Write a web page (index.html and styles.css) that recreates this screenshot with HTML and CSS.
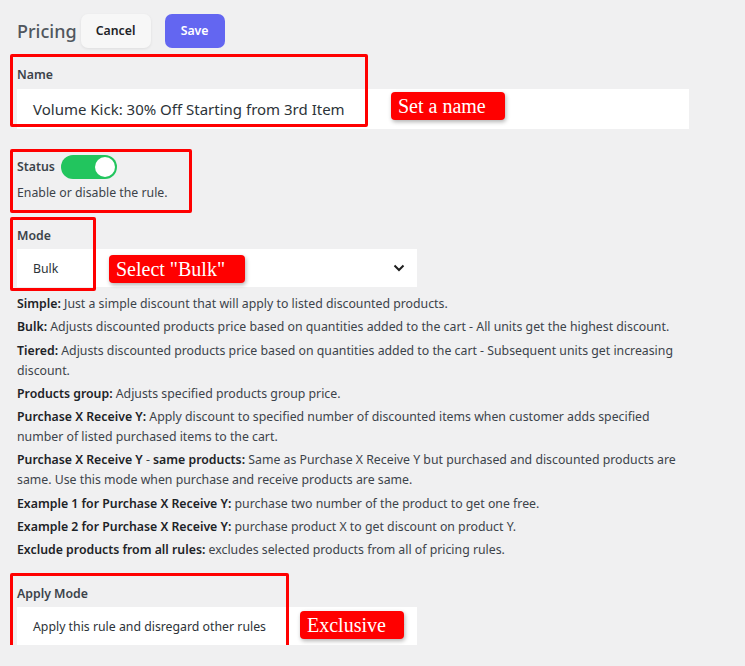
FILE: index.html
```html
<!DOCTYPE html>
<html lang="en">
  <head>
    <meta charset="UTF-8" />
    <meta name="viewport" content="width=device-width, initial-scale=1.0" />
    <title>Pricing rule</title>
    <link rel="stylesheet" href="styles.css">
  </head>
  <body>
    <div class="rule-editor">
      <div class="topbar">
        <h2 class="topbar-title">Pricing</h2>
        <button class="btn btn-cancel">Cancel</button>
        <button class="btn btn-save">Save</button>
      </div>

      <div class="field field-name">
        <label class="field-label">Name</label>
        <div class="text-input">Volume Kick: 30% Off Starting from 3rd Item</div>
        <div class="mark mark-name"></div>
        <span class="tag tag-name">Set a name</span>
      </div>

      <div class="field field-status">
        <div class="status-row">
          <label class="field-label">Status</label>
          <span class="toggle is-on"><span class="toggle-knob"></span></span>
        </div>
        <p class="field-help">Enable or disable the rule.</p>
        <div class="mark mark-status"></div>
      </div>

      <div class="field field-mode">
        <label class="field-label">Mode</label>
        <div class="select-input">
          <span>Bulk</span>
          <svg class="chevron" width="12" height="8" viewBox="0 0 12 8"><polyline points="1.5,1.5 6,6 10.5,1.5" fill="none" stroke="#1e1e1e" stroke-width="2" /></svg>
        </div>
        <div class="mark mark-mode"></div>
        <span class="tag tag-mode">Select "Bulk"</span>
      </div>

      <div class="mode-help">
        <p><b>Simple:</b> Just a simple discount that will apply to listed discounted products.</p>
        <p><b>Bulk:</b> Adjusts discounted products price based on quantities added to the cart - All units get the highest discount.</p>
        <p><b>Tiered:</b> Adjusts discounted products price based on quantities added to the cart - Subsequent units get increasing discount.</p>
        <p><b>Products group:</b> Adjusts specified products group price.</p>
        <p><b>Purchase X Receive Y:</b> Apply discount to specified number of discounted items when customer adds specified number of listed purchased items to the cart.</p>
        <p><b>Purchase X Receive Y</b> - <b>same products:</b> Same as Purchase X Receive Y but purchased and discounted products are same. Use this mode when purchase and receive products are same.</p>
        <p><b>Example 1 for Purchase X Receive Y:</b> purchase two number of the product to get one free.</p>
        <p><b>Example 2 for Purchase X Receive Y:</b> purchase product X to get discount on product Y.</p>
        <p><b>Exclude products from all rules:</b> excludes selected products from all of pricing rules.</p>
      </div>

      <div class="field field-apply">
        <label class="field-label">Apply Mode</label>
        <div class="select-input">
          <span>Apply this rule and disregard other rules</span>
          <svg class="chevron" width="12" height="8" viewBox="0 0 12 8"><polyline points="1.5,1.5 6,6 10.5,1.5" fill="none" stroke="#1e1e1e" stroke-width="2" /></svg>
        </div>
        <div class="mark mark-apply"></div>
        <span class="tag tag-apply">Exclusive</span>
      </div>
    </div>
  </body>
</html>
```

FILE: styles.css
```css
* {
  margin: 0;
  padding: 0;
  box-sizing: border-box;
}

body {
  font-family: "Noto Sans", "Open Sans", sans-serif;
  background: #f0f0f1;
  color: #3c434a;
  font-size: 12.3px;
}

.rule-editor {
  width: 745px;
  padding: 13px 0 0 17px;
}

/* header with title and actions */
.topbar {
  display: flex;
  align-items: center;
  height: 35px;
}

.topbar-title {
  font-size: 18px;
  font-weight: 500;
  color: #50575e;
  margin-right: 4px;
}

.btn {
  font-family: inherit;
  font-size: 12.3px;
  font-weight: 600;
  border: none;
  border-radius: 7px;
  height: 34px;
  cursor: pointer;
}

.btn-cancel {
  width: 70px;
  background: #f7f7f7;
  color: #1d2327;
  box-shadow: 0 1px 3px rgba(0, 0, 0, 0.08);
  margin-right: 14px;
}

.btn-save {
  width: 60px;
  background: #6366f1;
  color: #fff;
}

/* form fields */
.field {
  position: relative;
  width: 672px;
}

.field-label {
  display: block;
  font-size: 12.3px;
  font-weight: 600;
  color: #3c434a;
  line-height: 18px;
}

.text-input,
.select-input {
  background: #fff;
  display: flex;
  align-items: center;
  padding-left: 16px;
  color: #2c3338;
}

.text-input {
  height: 40px;
  font-size: 15px;
  margin-top: 5px;
}

.select-input {
  width: 400px;
  height: 38px;
  margin-top: 4px;
  font-size: 12.3px;
  justify-content: space-between;
  padding-right: 12px;
}

.field-name {
  margin-top: 18px;
}

.field-status {
  margin-top: 26px;
}

.status-row {
  display: flex;
  align-items: center;
  gap: 6px;
}

.toggle {
  display: inline-block;
  width: 56px;
  height: 24px;
  border-radius: 12px;
  background: #c3c4c7;
  position: relative;
}

.toggle.is-on {
  background: #22c55e;
}

.toggle-knob {
  position: absolute;
  top: 2px;
  left: 2px;
  width: 20px;
  height: 20px;
  border-radius: 50%;
  background: #fff;
}

.toggle.is-on .toggle-knob {
  left: 34px;
}

.field-help {
  margin-top: 5px;
  line-height: 18px;
}

.field-mode {
  margin-top: 25px;
}

.field-apply {
  margin-top: 25px;
}

/* mode descriptions */
.mode-help {
  width: 679px;
  margin-top: 7px;
  line-height: 20px;
}

.mode-help p {
  margin-bottom: 3.25px;
}

.mode-help b {
  font-weight: 600;
  color: #1d2327;
}

/* red callouts drawn over the form */
.mark {
  position: absolute;
  border: 3px solid #f00;
  border-radius: 2px;
  pointer-events: none;
}

.mark-name {
  left: -7px;
  top: -12px;
  width: 358px;
  height: 73px;
}

.mark-status {
  left: -7px;
  top: -6px;
  width: 182px;
  height: 64px;
}

.mark-mode {
  left: -7px;
  top: -10px;
  width: 86px;
  height: 74px;
}

.mark-apply {
  left: -7px;
  top: -12px;
  width: 279px;
  height: 78px;
}

.tag {
  position: absolute;
  background: #f00;
  color: #fff;
  font-family: "Liberation Serif", serif;
  font-size: 20px;
  line-height: 28px;
  padding: 0 7px;
  border-radius: 4px;
  box-shadow: 1px 2px 4px rgba(0, 0, 0, 0.3);
  white-space: nowrap;
}

.tag-name {
  left: 374px;
  top: 26px;
  width: 114px;
}

.tag-mode {
  left: 92px;
  top: 28px;
  width: 136px;
}

.tag-apply {
  left: 283px;
  top: 26px;
  width: 104px;
}
```
